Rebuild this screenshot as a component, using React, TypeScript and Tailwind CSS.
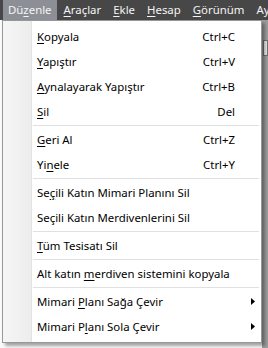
import React from "react"

type Item =
  | { sep: true }
  | { label: string; u?: number; key?: string; sub?: boolean; sep?: false }

const items: Item[] = [
  { label: "Kopyala", u: 0, key: "Ctrl+C" },
  { label: "Yapıştır", u: 0, key: "Ctrl+V" },
  { label: "Aynalayarak Yapıştır", u: 0, key: "Ctrl+B" },
  { label: "Sil", u: 0, key: "Del" },
  { sep: true },
  { label: "Geri Al", u: 0, key: "Ctrl+Z" },
  { label: "Yinele", u: 2, key: "Ctrl+Y" },
  { sep: true },
  { label: "Seçili Katın Mimari Planını Sil", u: 2 },
  { label: "Seçili Katın Merdivenlerini Sil" },
  { sep: true },
  { label: "Tüm Tesisatı Sil", u: 0 },
  { sep: true },
  { label: "Alt katın merdiven sistemini kopyala", u: 10 },
  { sep: true },
  { label: "Mimari Planı Sağa Çevir", u: 7, sub: true },
  { label: "Mimari Planı Sola Çevir", u: 8, sub: true },
]

const Label = ({ text, u }: { text: string; u?: number }) => {
  if (u === undefined) return <>{text}</>
  return (
    <>
      {text.slice(0, u)}
      <span className="underline underline-offset-2">{text[u]}</span>
      {text.slice(u + 1)}
    </>
  )
}

const bar = [
  { t: "Düzenle", u: 2 },
  { t: "Araçlar", u: 0 },
  { t: "Ekle", u: 0 },
  { t: "Hesap", u: 0 },
  { t: "Görünüm", u: 0 },
  { t: "Ayarlar" },
]

export default function App() {
  return (
    <div
      className="relative w-[268px] h-[348px] overflow-hidden bg-[#f4f4f4] text-[11.4px]"
      style={{ fontFamily: '"Noto Sans", "Open Sans", sans-serif' }}
    >
      <div className="h-[20px] bg-[#474747] flex items-stretch pl-[3px] text-[#f4f4f4] whitespace-nowrap">
        {bar.map((b, i) => (
          <div
            key={b.t}
            className={`flex items-center px-[5px] ${i === 0 ? "bg-[#8c9096]" : ""} ${i > 0 ? "ml-[2px]" : ""}`}
          >
            <Label text={b.t} u={b.u} />
          </div>
        ))}
      </div>

      <div className="flex h-[328px]">
        <div className="w-[262px] bg-[#fafafa]" />
        <div className="flex-1 bg-[#9c9c9c] flex flex-col pt-[20px]">
          <div className="h-[16px] ml-[1px] bg-[#e6e6e6] border border-[#6f6f6f]" />
        </div>
      </div>

      <div className="absolute top-[20px] left-[2px] w-[260px] bg-white border border-[#979797] shadow-[3px_3px_3px_rgba(0,0,0,0.35)] text-black">
        <div className="relative py-[3px]">
          <div className="absolute left-0 top-0 bottom-0 w-[29px] bg-gradient-to-r from-[#f6f6f6] to-[#ededed] border-r border-[#e2e3e3]" />
          {items.map((it, i) =>
            it.sep ? (
              <div key={i} className="relative h-[3px] flex items-center pl-[30px] pr-[2px]">
                <div className="h-px w-full bg-[#e0e0e0]" />
              </div>
            ) : (
              <div key={i} className="relative h-[25px] flex items-center whitespace-nowrap">
                <div className="flex-1 pl-[34px]">
                  <Label text={it.label} u={it.u} />
                </div>
                {it.key && <div className="text-right">{it.key}</div>}
                <div className="w-[26px] flex items-center pl-[16px]">
                  {it.sub && (
                    <svg width="4" height="7" viewBox="0 0 4 7">
                      <path d="M0 0 L4 3.5 L0 7 Z" fill="#000" />
                    </svg>
                  )}
                </div>
              </div>
            )
          )}
        </div>
      </div>
    </div>
  )
}
